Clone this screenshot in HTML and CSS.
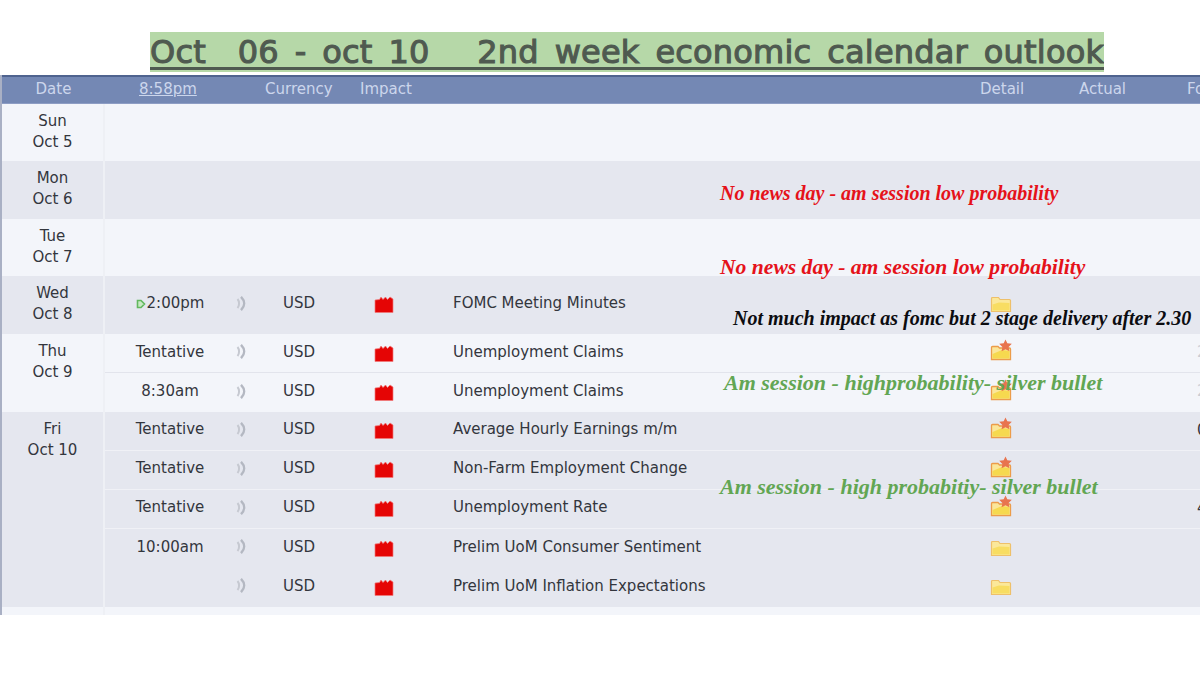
FILE: index.html
```html
<!DOCTYPE html>
<html lang="en">
<head>
<meta charset="utf-8">
<title>Economic calendar outlook</title>
<link rel="stylesheet" href="styles.css">
</head>
<body>
<svg class="defs" width="0" height="0" aria-hidden="true">
  <defs>
    <symbol id="snd" viewBox="0 0 10 15">
      <path d="M1.5 3C3.6 5.5 3.6 9.5 1.5 12" fill="none" stroke="#c6c9d1" stroke-width="2"/>
      <path d="M5 .8C9.2 5 9.2 10 5 14.2" fill="none" stroke="#b4b8c2" stroke-width="2.4"/>
    </symbol>
    <symbol id="imp" viewBox="0 0 20 17">
      <path d="M1 16.5V4L5.5 3.5 7 1 9 3.5 11.5 1 13.5 3.5 16 1 19 3V16.5Z" fill="#e50505" stroke="#f07a7a" stroke-width=".7"/>
    </symbol>
    <symbol id="fld" viewBox="0 0 22 18">
      <path d="M1.5 16.5V3.5A1 1 0 0 1 2.5 2.5H8.5L10 4.5H19.5A1 1 0 0 1 20.5 5.5V16.5Z" fill="#fbe89a" stroke="#eec06a" stroke-width="1.2"/>
      <path d="M2.5 15.5V9.5L9 7.5 19.5 8V15.5Z" fill="#f8dd62"/>
    </symbol>
    <symbol id="fls" viewBox="0 0 22 22">
      <path d="M1.5 20.5V8.5A1 1 0 0 1 2.5 7.5H8L9.5 9H19.5A1 1 0 0 1 20.5 10V20.5Z" fill="#fbe69a" stroke="#ec9c4a" stroke-width="1.3"/>
      <path d="M2.5 19.5V15L12 11 19.5 12V19.5Z" fill="#f6d94f"/>
      <path d="M15.5 .5 17.3 4.2 21.8 4.8 18.6 7.9 19.4 12.3 15.5 10.2 11.6 12.3 12.4 7.9 9.2 4.8 13.7 4.2Z" fill="#e8744f"/>
    </symbol>
  </defs>
</svg>

<main class="page">
  <div class="title-wrap"><h1 class="title">Oct  06 - oct 10   2nd week economic calendar outlook</h1></div>

  <section class="cal">
    <div class="head">
      <span class="h-date">Date</span>
      <span class="h-time">8:58pm</span>
      <span class="h-cur">Currency</span>
      <span class="h-imp">Impact</span>
      <span class="h-det">Detail</span>
      <span class="h-act">Actual</span>
      <span class="h-for">Forecast</span>
    </div>

    <div class="day light"><div class="date">Sun<br>Oct 5</div><div class="events"></div></div>
    <div class="day dark"><div class="date">Mon<br>Oct 6</div><div class="events"></div></div>
    <div class="day light"><div class="date">Tue<br>Oct 7</div><div class="events"></div></div>

    <div class="day dark">
      <div class="date">Wed<br>Oct 8</div>
      <div class="events">
        <div class="ev tall">
          <span class="time"><svg class="play" viewBox="0 0 10 10"><path d="M1.5 1.5H5L8.5 5 5 8.5H1.5Z" fill="#c8eac4" stroke="#62b85e" stroke-width="1.6"/></svg>2:00pm</span>
          <svg class="snd"><use href="#snd"/></svg><span class="cur">USD</span>
          <svg class="imp"><use href="#imp"/></svg><span class="name">FOMC Meeting Minutes</span>
          <svg class="fld"><use href="#fld"/></svg>
        </div>
      </div>
    </div>

    <div class="day light">
      <div class="date">Thu<br>Oct 9</div>
      <div class="events">
        <div class="ev">
          <span class="time">Tentative</span><svg class="snd"><use href="#snd"/></svg><span class="cur">USD</span>
          <svg class="imp"><use href="#imp"/></svg><span class="name">Unemployment Claims</span>
          <svg class="fls"><use href="#fls"/></svg><span class="fc faint">2</span>
        </div>
        <div class="ev">
          <span class="time">8:30am</span><svg class="snd"><use href="#snd"/></svg><span class="cur">USD</span>
          <svg class="imp"><use href="#imp"/></svg><span class="name">Unemployment Claims</span>
          <svg class="fls"><use href="#fls"/></svg><span class="fc faint">2</span>
        </div>
      </div>
    </div>

    <div class="day dark">
      <div class="date">Fri<br>Oct 10</div>
      <div class="events">
        <div class="ev">
          <span class="time">Tentative</span><svg class="snd"><use href="#snd"/></svg><span class="cur">USD</span>
          <svg class="imp"><use href="#imp"/></svg><span class="name">Average Hourly Earnings m/m</span>
          <svg class="fls"><use href="#fls"/></svg><span class="fc">0</span>
        </div>
        <div class="ev">
          <span class="time">Tentative</span><svg class="snd"><use href="#snd"/></svg><span class="cur">USD</span>
          <svg class="imp"><use href="#imp"/></svg><span class="name">Non-Farm Employment Change</span>
          <svg class="fls"><use href="#fls"/></svg>
        </div>
        <div class="ev">
          <span class="time">Tentative</span><svg class="snd"><use href="#snd"/></svg><span class="cur">USD</span>
          <svg class="imp"><use href="#imp"/></svg><span class="name">Unemployment Rate</span>
          <svg class="fls"><use href="#fls"/></svg><span class="fc">4</span>
        </div>
        <div class="ev plain">
          <span class="time">10:00am</span><svg class="snd"><use href="#snd"/></svg><span class="cur">USD</span>
          <svg class="imp"><use href="#imp"/></svg><span class="name">Prelim UoM Consumer Sentiment</span>
          <svg class="fld"><use href="#fld"/></svg>
        </div>
        <div class="ev plain">
          <span class="time"></span><svg class="snd"><use href="#snd"/></svg><span class="cur">USD</span>
          <svg class="imp"><use href="#imp"/></svg><span class="name">Prelim UoM Inflation Expectations</span>
          <svg class="fld"><use href="#fld"/></svg>
        </div>
      </div>
    </div>

    <div class="day tail"><div class="date"></div><div class="events"></div></div>
  </section>

  <p class="note red n1">No news day - am session low probability</p>
  <p class="note red n2">No news day - am session low probability</p>
  <p class="note black n3">Not much impact as fomc but 2 stage delivery after 2.30</p>
  <p class="note green n4">Am session - highprobability- silver bullet</p>
  <p class="note green n5">Am session - high probabitiy- silver bullet</p>
</main>
</body>
</html>
```

FILE: styles.css
```css
* { box-sizing: border-box; }
html, body { margin: 0; padding: 0; background: #fff; }
body { width: 1200px; height: 675px; overflow: hidden; font-family: "DejaVu Sans", Verdana, sans-serif; }
.defs { position: absolute; }
.page { position: relative; width: 1200px; height: 675px; overflow: hidden; }

.title-wrap { display: flex; padding: 32px 0 0 150px; height: 75px; }
.title {
  margin: 0; width: 954px; height: 40px; background: #b6d8a8; color: #4f5a50;
  font-family: "DejaVu Sans", sans-serif; font-size: 32px; font-weight: 400; line-height: 40px;
  letter-spacing: .2px; word-spacing: 5.5px;
  white-space: pre; text-decoration: underline; text-decoration-thickness: 3px; text-underline-offset: 4px;
  -webkit-text-stroke: 1.1px #4f5a50; overflow: hidden;
}

.cal { border-left: 2px solid #a9b0c4; width: 1200px; font-size: 15px; color: #33363d; }
.head {
  display: flex; align-items: center; height: 29px; background: #7488b4;
  border-top: 2px solid #4f638f; border-bottom: 1px solid #8d9dc4;
  color: #ccd6ec; font-size: 15px; padding-bottom: 2px; overflow: hidden; white-space: nowrap;
}
.head span { flex: none; }
.h-date { width: 103px; text-align: center; }
.h-time { width: 86px; margin-left: 34px; text-decoration: underline; }
.h-cur { width: 95px; margin-left: 40px; }
.h-imp { width: 80px; }
.h-det { width: 99px; margin-left: 540px; }
.h-act { width: 108px; }

.day { display: flex; }
.light { background: #f3f5fa; }
.dark { background: #e5e7ef; }
.date {
  flex: none; width: 103px; min-height: 57.4px; padding-top: 7px; text-align: center; line-height: 21px;
  border-right: 2px solid #eef0f5;
}
.events { flex: 1; min-width: 0; }
.ev {
  position: relative; display: flex; align-items: center; height: 39px; line-height: 20px; padding-bottom: 2px;
  border-bottom: 1px solid #e2e4ec; white-space: nowrap;
}
.dark .ev { border-bottom-color: #f0f1f6; padding-bottom: 3px; }
.ev:last-child { border-bottom: 0; }
.dark .ev.plain { border-bottom: 0; padding-bottom: 3px; }
.ev.tall { height: 57px; padding-bottom: 3px; }
.time { flex: none; width: 130px; display: flex; align-items: center; justify-content: center; }
.play { flex: none; width: 10px; height: 10px; margin-top: 2px; margin-right: 1px; }
.snd { flex: none; width: 10px; height: 15px; margin: 0 1px; }
.cur { flex: none; width: 42px; margin-left: 36px; }
.imp { flex: none; width: 20px; height: 17px; margin-left: 49px; margin-top: 3px; }
.name { flex: none; width: 529px; margin-left: 59px; }
.fld, .fls { flex: none; width: 22px; height: 18px; margin-left: 8px; margin-top: 2px; }
.fls { height: 22px; margin-top: -3px; }
.fc { position: absolute; left: 1092px; top: 8px; }
.faint { color: #c9ccd4; }

.tail { height: 8px; background: #f3f5fa; }
.tail .date { min-height: 0; padding: 0; height: 8px; }

.note { position: absolute; margin: 0; white-space: nowrap; font-family: "Liberation Serif", serif; font-style: italic; font-weight: 700; line-height: 30px; }
.red { color: #e5121a; }
.black { color: #0c0c10; }
.green { color: #62a653; }
.n1 { left: 720px; top: 178px; font-size: 20px; }
.n2 { left: 720px; top: 252px; font-size: 21.6px; }
.n3 { left: 733px; top: 303px; font-size: 20px; }
.n4 { left: 724px; top: 368px; font-size: 22px; }
.n5 { left: 720px; top: 472px; font-size: 22px; }
```
